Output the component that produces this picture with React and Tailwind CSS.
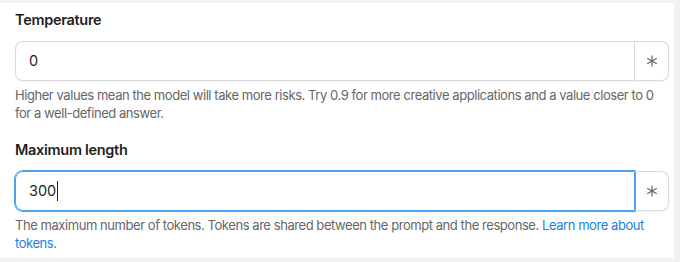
import { useState } from "react";

function Field({ label, value, focused, children }) {
  return (
    <div className="flex flex-col">
      <label className="text-[14.5px] font-semibold text-[#1f1f1f] leading-[20px] mb-[11px] tracking-[-0.3px]">
        {label}
      </label>
      <div className="flex h-[40px] rounded-[8px] shadow-[0_1px_2px_rgba(0,0,0,0.06)]">
        <div
          className={`flex-1 flex items-center pl-[13px] rounded-l-[8px] border ${
            focused
              ? "border-[#4aa3f0] ring-1 ring-[#4aa3f0]"
              : "border-[#d9d9d9] border-r-[#dcdcdc]"
          }`}
        >
          <span className="text-[14.5px] text-[#1f1f1f]">{value}</span>
          {focused && <span className="w-px h-[20px] bg-[#222] ml-px" />}
        </div>
        <button className="w-[34px] flex items-center justify-center border border-l-0 border-[#d9d9d9] rounded-r-[8px]">
          <svg width="12" height="12" viewBox="0 0 12 12" stroke="#666" strokeWidth="1.2">
            <line x1="6" y1="0.5" x2="6" y2="11.5" />
            <line x1="1.2" y1="3.2" x2="10.8" y2="8.8" />
            <line x1="1.2" y1="8.8" x2="10.8" y2="3.2" />
          </svg>
        </button>
      </div>
      <p className="mt-[5px] text-[13px] leading-[18px] text-[#666] tracking-[-0.44px]">
        {children}
      </p>
    </div>
  );
}

export default function App() {
  const [temp] = useState("0");
  const [len] = useState("300");
  return (
    <div
      className="w-[680px] h-[262px] bg-[#f2f2f2] pt-[3px] pb-[4px] pr-[6px]"
      style={{ fontFamily: "Inter, 'Noto Sans', sans-serif" }}
    >
      <div className="h-full bg-white pl-[15px] pr-[5px] pt-[7px] flex flex-col gap-[18px]">
        <Field label="Temperature" value={temp}>
          Higher values mean the model will take more risks. Try 0.9 for more creative
          applications and a value closer to 0 for a well-defined answer.
        </Field>
        <Field label="Maximum length" value={len} focused>
          The maximum number of tokens. Tokens are shared between the prompt and the
          response.{" "}
          <a href="#" className="text-[#1a7fe0]">
            Learn more about tokens.
          </a>
        </Field>
      </div>
    </div>
  );
}
